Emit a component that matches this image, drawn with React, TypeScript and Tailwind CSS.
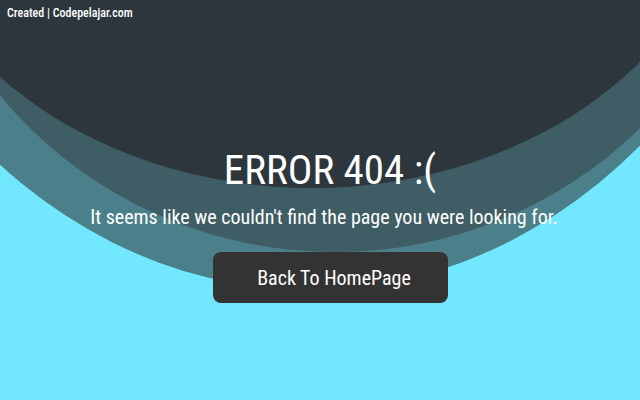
export default function App(): JSX.Element {
  return (
    <div
      className="relative h-[400px] w-[640px] overflow-hidden bg-[#71e8ff] text-white font-stretch-condensed"
      style={{ fontFamily: "Roboto, 'Liberation Sans', sans-serif" }}
    >
      <Waves />
      <p className="absolute left-[7px] top-[4px] text-[12px] font-medium">Created | Codepelajar.com</p>
      <main className="relative flex flex-col items-center pl-[20px] pt-[146px]">
        <h1 className="text-[41px] leading-[48px]">ERROR 404 :(</h1>
        <p className="mt-[11px] -translate-x-[6px] text-[20px] leading-[24px]">
          It seems like we couldn't find the page you were looking for.
        </p>
        <a
          href="#"
          className="mt-[23px] flex h-[51px] w-[235px] items-center justify-center rounded-[8px] bg-[#333333] pl-[8px] text-[20px]"
        >
          Back To HomePage
        </a>
      </main>
    </div>
  )
}

function Waves(): JSX.Element {
  return (
    <svg viewBox="0 0 640 400" className="absolute inset-0 h-full w-full" aria-hidden>
      <ellipse cx="310" cy="-345" rx="520" ry="635" fill="#4b7f89" />
      <ellipse cx="335" cy="-168" rx="430" ry="420" fill="#3f5d64" />
      <ellipse cx="312" cy="-148" rx="420" ry="336" fill="#2e363d" />
    </svg>
  )
}
